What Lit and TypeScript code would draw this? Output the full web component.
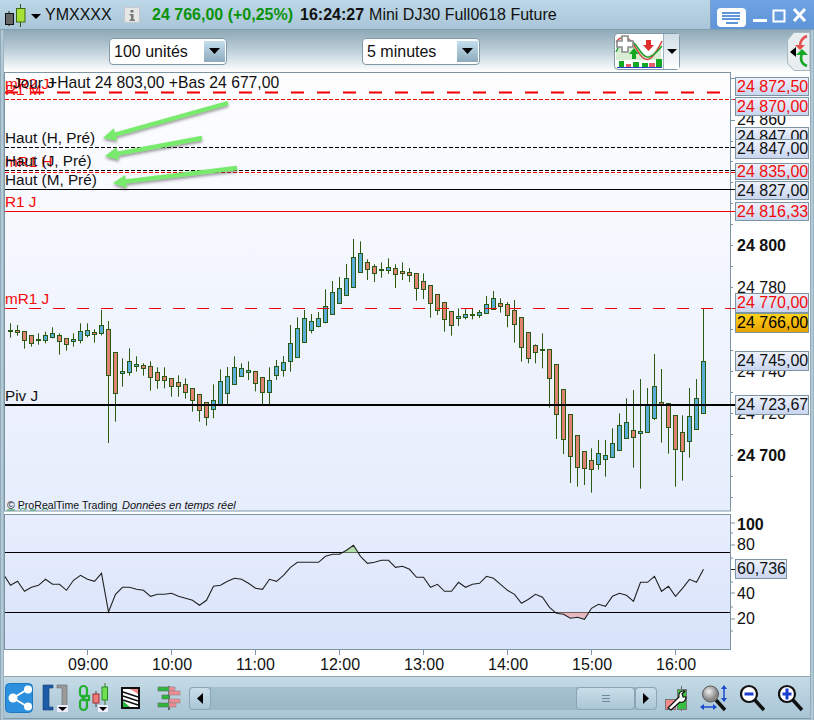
import { LitElement, html, css, svg } from "lit";
import { customElement } from "lit/decorators.js";

type C = [number, number, number, number, number];
const A: C[] = [[280,323,301,304,1],[285,317,301,307,0],[305,356,304,331,0],[315,350,316,340,0],[310,344,328,331,1],[305,340,316,331,1],[292,325,310,322,1],[310,374,316,334,0],[325,362,325,343,0],[310,350,328,334,1],[280,340,304,331,1],[280,322,301,316,1],[298,338,307,313,0],[240,316,286,310,1],[273,639,298,436,0],[367,575,367,490,0],[385,470,424,430,1],[355,437,394,427,1],[379,425,403,409,1],[400,437,406,415,0],[394,482,409,442,0],[412,476,427,451,0],[412,475,439,451,0],[445,500,445,469,0],[436,500,457,469,0],[445,506,463,487,0],[475,545,475,511,0],[493,575,493,541,0],[517,587,517,562,0],[463,565,511,538,1],[418,525,454,525,1],[411,525,439,490,1],[379,465,412,463,1],[400,440,415,439,1],[394,450,421,427,1],[424,484,424,460,0],[442,525,442,487,0],[412,525,451,487,1]];
const B: C[] = [[390,450,408,435,1],[378,440,396,420,1],[285,425,340,395,1],[262,382,295,382,1],[240,337,265,337,1],[252,310,274,301,1],[246,292,265,289,1],[178,280,229,277,1],[153,253,187,253,1],[141,220,175,220,1],[102,196,145,196,1],[27,172,82,172,1],[34,127,70,127,1],[88,150,97,118,0],[103,156,109,130,0],[97,143,118,121,1],[85,132,112,121,1],[103,174,115,133,0],[97,150,124,130,0],[114,156,127,136,0],[130,212,130,175,0],[130,207,154,178,0],[166,263,166,220,0],[193,255,193,241,0],[217,305,217,268,0],[244,317,244,286,0],[235,288,259,265,1],[235,268,253,262,1],[235,268,253,256,1],[240,264,247,256,1],[198,250,223,250,1],[183,238,205,238,1],[205,248,220,229,0],[216,292,223,256,0],[210,338,241,283,0],[262,395,262,352,0],[307,400,307,385,0]];
const D: C[] = [[133,190,136,157,0],[100,205,148,151,1],[148,323,148,235,0],[193,417,193,343,0],[268,462,268,418,0],[343,549,343,469,0],[406,560,406,502,0],[454,555,454,505,0],[445,578,481,508,0],[420,509,460,493,1],[420,530,466,478,1],[385,473,430,472,1],[340,451,376,451,1],[295,415,367,415,1],[270,503,391,412,0],[237,566,394,400,1],[264,397,316,397,1],[162,360,259,355,1],[207,428,307,313,0],[310,461,310,382,0],[346,560,346,448,0],[346,542,397,454,0],[264,473,349,424,1],[237,388,295,388,1],[25,340,184,340,1]];

const snap = (v: number) => Math.round(v - 0.5) + 0.5;
const toReal = (g: C[], y0: number) => g.map(c => [y0 + c[0] / 3, y0 + c[1] / 3, y0 + c[2] / 3, y0 + c[3] / 3, c[4]] as C);
const candles: C[] = [...toReal(A, 230), ...toReal(B, 230), ...toReal(D, 300)];

const rsiA = [271,259,289,277,271,253,268,268,286,256,241,253,259,235,351,298,277,277,283,286,304,298,298,295,304,310,316,331,316,274,271,259,250,253,265,280,283,253,259,241,217,202,202,202,202,184,178,178,166,151,184,205,202,196,196,217];
const rsiB = [214,223,247,247,277,268,289,289,262,277,268,265,244,250,268,286,298,325,313,298,307,337,355,358,370,367,373,340,328,334,304,295,301,319,262,262,244,289,274,304,280,253,262,223];
const rsiPts = [`5,${495 + 245 / 3}`, ...rsiA.map((z, i) => `${10.5 + 7 * i},${(495 + z / 3).toFixed(1)}`), ...rsiB.map((z, i) => `${10.5 + 7 * (i + 56)},${(495 + z / 3).toFixed(1)}`)].join(" ");

const lines = [
  { y: 92.5, w: 2, c: "#f00000", d: "13 13", x2: 730 },
  { y: 99.5, w: 1, c: "#f00000", d: "4 2", x2: 735 },
  { y: 147.5, w: 1, c: "#000", d: "4 2", x2: 735 },
  { y: 170.5, w: 1, c: "#000", d: "4 2", x2: 735 },
  { y: 172.5, w: 1, c: "#f00000", d: "4 2", x2: 735 },
  { y: 189.5, w: 1, c: "#000", d: "", x2: 735 },
  { y: 211.5, w: 1, c: "#f00000", d: "", x2: 735 },
  { y: 308.5, w: 1, c: "#f00000", d: "12 12", x2: 735 },
  { y: 405, w: 2, c: "#000", d: "", x2: 735 },
  { y: 552.5, w: 1, c: "#000", d: "", x2: 730 },
  { y: 612.5, w: 1, c: "#000", d: "", x2: 730 },
];

const axisText: [string, number, boolean][] = [["24 880", 84, false], ["24 860", 119, false], ["24 847,00", 134, false], ["24 800", 245, true], ["24 780", 287, false], ["24 740", 371, false], ["24 720", 413, false], ["24 700", 455, true]];
const tags: [string, number, number, string][] = [
  ["24 872,50", 77, 96, "red"], ["24 870,00", 97, 116, "red"], ["24 847,00", 127, 146, ""], ["24 847,00", 139, 159, ""],
  ["24 835,00", 163, 180, "red"], ["24 827,00", 181, 200, ""], ["24 816,33", 202, 221, "red"],
  ["24 770,00", 293, 313, "red"], ["24 766,00", 313, 333, "gold"], ["24 745,00", 351, 371, ""], ["24 723,67", 395, 415, ""],
];
const labels: [string, number, number, string][] = [
  ["mR2 J", 5, 83, "red"], ["R1 M", 5, 89, "red"],
  ["Jour J", 13, 82, ""], ["+Haut 24 803,00 +Bas 24 677,00", 48, 82, "wide"],
  ["Haut (H, Pré)", 5, 137, ""], ["mR1 H", 5, 161, "red"], ["Haut (J, Pré)", 5, 160, ""], ["Haut (M, Pré)", 5, 179, ""],
  ["R1 J", 5, 201, "red"], ["mR1 J", 5, 298, "red"], ["Piv J", 5, 395, ""],
];
const rsiAxis: [string, number, boolean][] = [["100", 524, true], ["80", 544, false], ["40", 593, false], ["20", 618, false]];
const priceTicks = [78, 99, 120, 141, 161, 182, 203, 224, 245, 266, 287, 308, 329, 350, 371, 392, 413, 434, 455, 476, 497];
const rsiMajor = [523, 545, 569.5, 593, 619];
const rsiMinor = [533, 558, 582, 607, 631];
const times = ["09:00", "10:00", "11:00", "12:00", "13:00", "14:00", "15:00", "16:00"];

function arrow(x1: number, y1: number, x2: number, y2: number) {
  const a = Math.atan2(y2 - y1, x2 - x1);
  const ux = Math.cos(a), uy = Math.sin(a), nx = -uy, ny = ux;
  const bx = x2 - ux * 13, by = y2 - uy * 13;
  const p = (x: number, y: number) => `${x.toFixed(1)},${y.toFixed(1)}`;
  const pts = [
    p(x1 + nx * 2.2, y1 + ny * 2.2), p(bx + nx * 2.2, by + ny * 2.2), p(bx + nx * 6.5, by + ny * 6.5), p(x2, y2),
    p(bx - nx * 6.5, by - ny * 6.5), p(bx - nx * 2.2, by - ny * 2.2), p(x1 - nx * 2.2, y1 - ny * 2.2),
  ].join(" ");
  return svg`<polygon points=${pts} fill="#78ea6c" filter="url(#sh)"></polygon>`;
}

const tri = (x: number, y: number, w: number, h: number, dir = "down", fill = "#000") => {
  if (dir === "down") return svg`<polygon points="${x},${y} ${x + w},${y} ${x + w / 2},${y + h}" fill=${fill}></polygon>`;
  if (dir === "left") return svg`<polygon points="${x + w},${y} ${x + w},${y + h} ${x},${y + h / 2}" fill=${fill}></polygon>`;
  return svg`<polygon points="${x},${y} ${x},${y + h} ${x + w},${y + h / 2}" fill=${fill}></polygon>`;
};

@customElement("app-root")
export class AppRoot extends LitElement {
  static styles = css`
    :host { display: block; width: 814px; height: 720px; overflow: hidden; font-family: "Liberation Sans", Arial, sans-serif; font-size: 16px; color: #111; background: #a9c3d2; }
    .title { height: 29px; display: flex; align-items: center; background: linear-gradient(#bcd7e7, #a9c6d8); border-bottom: 1px solid #83a0af; white-space: pre; }
    .title svg { display: block; flex: none; }
    .sym { margin-left: 3px; width: 79px; }
    .info { margin-right: 12px; }
    .chg { font-weight: bold; color: #0b920b; margin-right: 7px; }
    .clock { font-weight: bold; }
    .desc { margin-left: 5px; }
    .win { margin-left: auto; width: 103px; height: 29px; background: linear-gradient(#6ea3e4, #5e95d8); display: flex; align-items: center; border-left: 1px solid #7c9fc4; }
    .body { display: flex; height: 690px; }
    .frame { width: 4px; flex: none; background: linear-gradient(90deg, #7f9cac, #c3d7e2 50%, #8ca8b8); }
    .main { width: 806px; display: flex; flex-direction: column; }
    .toolbar { flex: none; height: 42px; display: flex; align-items: center; background: linear-gradient(#8fa9b7, #b9ccd6 45%, #fff); }
    .sel { box-sizing: border-box; width: 118px; height: 27px; background: #fff; border: 1px solid #7f99a8; border-radius: 4px; display: flex; align-items: center; padding: 0 1px 0 4px; justify-content: space-between; }
    .sel.first { margin-left: 105px; }
    .sel.second { margin-left: 135px; }
    .sel .txt { padding-top: 1px; }
    .drop { width: 21px; height: 21px; background: linear-gradient(#c4deee, #8dabbd); display: flex; align-items: center; justify-content: center; }
    .ind { margin-left: 134px; width: 66px; height: 37px; box-sizing: border-box; border: 1px solid #7f99a8; border-radius: 4px; display: flex; background: #fff; }
    .ind .more { flex: 1; border-left: 1px solid #9db2bf; background: linear-gradient(#cfdde5, #fff); display: flex; align-items: center; justify-content: center; }
    .side { margin-left: 107px; display: block; }
    .stage { flex: none; position: relative; height: 604px; background: #fff; }
    .stage > svg { position: absolute; left: 0; top: 0; display: block; }
    .lb { position: absolute; line-height: 18px; height: 18px; white-space: pre; color: #111; font-size: 15.3px; }
    .lb.ax { font-size: 16px; }
    .lb.wide { font-size: 15.7px; }
    .lb.red { color: #f30a0a; }
    .lb.bold { font-weight: bold; }
    .lb.sm { font-size: 10.6px; line-height: 12px; height: 12px; }
    .lb.it { font-size: 11px; font-style: italic; }
    .tag { position: absolute; box-sizing: border-box; border: 1px solid #7d95a3; background: linear-gradient(#eef2fd, #c9d5ef); padding-left: 1px; white-space: pre; display: flex; align-items: center; color: #111; }
    .tag.red { color: #f30a0a; }
    .tag.gold { background: linear-gradient(#ffd21a, #e6a200); color: #000; }
    .bar { flex: none; height: 43px; box-sizing: border-box; display: flex; align-items: center; border-top: 1px solid #8ea6b3; border-bottom: 1px solid #7f99a8; background: linear-gradient(#c5dbe7, #a8c4d4); padding: 1px 0 0 1px; }
    .bar > svg { display: block; flex: none; }
    .m9 { margin-left: 9px; } .m10 { margin-left: 10px; } .m13 { margin-left: 13px; } .m17 { margin-left: 17px; } .m12 { margin-left: 12px; }
    .scroll { flex: none; margin: 0 8px; width: 468px; height: 23px; display: flex; background: #99b5c5; border-radius: 4px; }
    .sb { box-sizing: border-box; flex: none; width: 22px; border: 1px solid #8aa5b4; border-radius: 4px; background: linear-gradient(#c9dee9, #aac6d6); display: flex; align-items: center; justify-content: center; }
    .track { flex: 1; background: linear-gradient(#a5c0cf, #9ab7c7); }
    .thumb { box-sizing: border-box; width: 59px; border: 1px solid #8aa5b4; border-radius: 4px; background: linear-gradient(#c9dee9, #aac6d6); display: flex; align-items: center; justify-content: center; }
  `;

  private chart() {
    return svg`
      <defs>
        <linearGradient id="g1" x1="0" y1="0" x2="0" y2="1"><stop offset="0" stop-color="#fefeff"/><stop offset="1" stop-color="#e6edfc"/></linearGradient>
        <linearGradient id="g2" x1="0" y1="0" x2="0" y2="1"><stop offset="0" stop-color="#e8eefd"/><stop offset="1" stop-color="#d8e3fa"/></linearGradient>
        <linearGradient id="g3" x1="0" y1="0" x2="0" y2="1"><stop offset="0" stop-color="#e6b4b8"/><stop offset="1" stop-color="#e4c4cc"/></linearGradient>
        <filter id="sh" x="-20%" y="-60%" width="140%" height="220%"><feDropShadow dx="0" dy="2" stdDeviation="1.6" flood-color="#444" flood-opacity=".55"/></filter>
      </defs>
      <rect x="4.5" y="72.5" width="726" height="438.5" fill="url(#g1)" stroke="#7d95a3"/>
      <rect x="4.5" y="514.5" width="726" height="135" fill="url(#g2)" stroke="#7d95a3"/>
      ${candles.map((c, i) => {
        const x = 10.5 + 7 * i;
        const top = snap(c[2]);
        const h = Math.max(1, Math.round(c[3] - c[2]));
        return svg`<line x1=${x} x2=${x} y1=${c[0]} y2=${c[1]} stroke="#2a5a12"/>
          <rect x=${x - 2} y=${top} width="4" height=${h} fill=${c[4] ? "#58aed6" : "#e08272"} stroke="#2a5a12"/>`;
      })}
      ${lines.map(l => svg`<line x1="5" x2=${l.x2} y1=${l.y} y2=${l.y} stroke=${l.c} stroke-width=${l.w} stroke-dasharray=${l.d || "none"}/>`)}
      <polygon points="343.3,552.5 353.3,545.3 358.3,552.5" fill="#b4e0ae"/>
      <polygon points="556.3,612.5 563.3,614.3 570.3,618.3 577.3,617.3 584.3,619.3 589.6,612.5" fill="url(#g3)"/>
      <polyline points=${rsiPts} fill="none" stroke="#222" stroke-width="1.1"/>
      ${arrow(228, 103, 103, 138)}
      ${arrow(202, 138, 105, 156)}
      ${arrow(237, 168, 113, 183)}
      ${priceTicks.map((y) => svg`<line x1="731" x2=${(y - 78) % 42 === 0 ? 735 : 733} y1=${y + 0.5} y2=${y + 0.5} stroke="#7d95a3"/>`)}
      ${rsiMajor.map(y => svg`<line x1="731" x2="735" y1=${y} y2=${y} stroke="#7d95a3"/>`)}
      ${rsiMinor.map(y => svg`<line x1="731" x2="733" y1=${y} y2=${y} stroke="#7d95a3"/>`)}
      <line x1="731" x2="735" y1="569.5" y2="569.5" stroke="#222"/>
      ${times.map((_, i) => svg`<line x1=${87.5 + 84 * i} x2=${87.5 + 84 * i} y1="650" y2="655" stroke="#7d95a3"/>`)}
      <path d="M7 510h8M20 510l3-2 3 2M30 510h6M42 510l3-2 3 2" fill="none" stroke="#2aa04a" stroke-width="1"/>
    `;
  }

  private pos(x: number, cy: number) {
    return `left:${x - 4}px;top:${cy - 8 - 72}px`;
  }

  private indicatorIcon() {
    return html`<svg width="48" height="35" viewBox="0 0 48 35">
      <path d="M1 20C8 4 15 4 22 14S34 26 46 8L46 26L1 26Z" fill="#cfe8c8" opacity=".8"/>
      <path d="M1 8C8 0 14 2 22 16S36 30 47 7" fill="none" stroke="#d84040" stroke-width="1.5"/>
      <path d="M1 18C8 3 16 3 23 14S34 28 47 12" fill="none" stroke="#20a030" stroke-width="1.5"/>
      <path d="M7 2h6v5h5v6h-5v5H7v-5H2V7h5z" fill="#fff" stroke="#8a8a8a" stroke-width="1.6"/>
      <path d="M31 6h5v5h3l-5.500 6-5.500-6h3z" fill="#e02f2f"/>
      <path d="M17 25v-5h-3l5-6 5 6h-3v5z" fill="#12a822"/>
      <g fill="#12a822"><rect x="4" y="27" width="5" height="6"/><rect x="18" y="28" width="6" height="5"/><rect x="27" y="29" width="6" height="4"/><rect x="41" y="25" width="6" height="8"/></g>
      <g fill="#e2606a"><rect x="11" y="30" width="5" height="3"/><rect x="34" y="29" width="6" height="4"/></g>
      <rect x="2" y="33" width="45" height="1" fill="#2a3fd0"/>
    </svg>`;
  }

  render() {
    return html`
      <div class="title">
        <svg width="42" height="29" viewBox="0 0 42 29">
          <path d="M9 11v15" stroke="#222"/><rect x="5.500" y="13.500" width="8" height="11" fill="#666" stroke="#111"/>
          <path d="M20.500 4v23" stroke="#2a5a12"/><rect x="16.500" y="8.500" width="8.500" height="13.500" fill="#a8e038" stroke="#3a6a12"/>
          ${tri(31, 14, 10, 5)}
        </svg>
        <span class="sym">YMXXXX</span>
        <svg class="info" width="16" height="16" viewBox="0 0 16 16"><rect x=".5" y=".5" width="15" height="15" fill="#e6e8e8" stroke="#c4c8ca"/><rect x="6.500" y="3" width="3" height="2.500" fill="#777"/><path d="M5.500 7h4v5.500h1.500V14H5.500v-1.500H7V8.500H5.500z" fill="#777"/></svg>
        <span class="chg">24 766,00 (+0,25%)</span>
        <span class="clock">16:24:27</span>
        <span class="desc">Mini DJ30 Full0618 Future</span>
        <div class="win">
          <svg width="102" height="29" viewBox="0 0 102 29">
            <rect x="6" y="8" width="29" height="19" rx="4" fill="#fff"/>
            <g fill="#5e95d8"><rect x="11" y="12" width="18" height="2"/><rect x="11" y="15" width="18" height="2"/><rect x="11" y="18" width="18" height="2"/><rect x="15" y="22" width="12" height="2"/></g>
            <rect x="42" y="19" width="14" height="3" fill="#fff"/>
            <rect x="62.500" y="10.500" width="11" height="11" fill="none" stroke="#fff" stroke-width="2"/>
            <path d="M83 9l11 12M94 9L83 21" stroke="#fff" stroke-width="3"/>
          </svg>
        </div>
      </div>
      <div class="body">
        <div class="frame"></div>
        <div class="main">
          <div class="toolbar">
            <div class="sel first"><span class="txt">100 unités</span><span class="drop"><svg width="11" height="6"><polygon points="0,0 11,0 5.500,6"/></svg></span></div>
            <div class="sel second"><span class="txt">5 minutes</span><span class="drop"><svg width="11" height="6"><polygon points="0,0 11,0 5.500,6"/></svg></span></div>
            <div class="ind">${this.indicatorIcon()}<div class="more"><svg width="10" height="5"><polygon points="0,0 10,0 5,5"/></svg></div></div>
            <svg class="side" width="23" height="39" viewBox="0 0 23 39">
              <path d="M.5 8L7 .5h16v38H7L.5 31z" fill="#e8edf0" stroke="#a8b8c2"/>
              ${tri(3, 15, 6, 10, "left")}
              <path d="M20 4c-5 2-7 6-7 10" fill="none" stroke="#e25050" stroke-width="2.500"/><path d="M8 13l5 5 5-5z" fill="#e25050"/>
              <path d="M20 34c-6-2-7-7-5-13" fill="none" stroke="#18a828" stroke-width="2.500"/><path d="M9 23l6-6 6 6z" fill="#18a828"/>
            </svg>
          </div>
          <div class="stage">
            <svg width="806" height="604" viewBox="4 72 806 604">${this.chart()}</svg>
            ${labels.map(l => html`<div class="lb ${l[3]}" style=${this.pos(l[1], l[2])}>${l[0]}</div>`)}
            <div class="lb sm" style="left:3px;top:427px">© ProRealTime Trading</div><div class="lb sm it" style="left:118px;top:427px">Données en temps réel</div>
            ${axisText.map(a => html`<div class="lb ax ${a[2] ? "bold" : ""}" style=${this.pos(737, a[1])}>${a[0]}</div>`)}
            ${rsiAxis.map(a => html`<div class="lb ax ${a[2] ? "bold" : ""}" style=${this.pos(737, a[1])}>${a[0]}</div>`)}
            ${tags.map(t => html`<div class="tag ${t[3]}" style="left:731px;width:74px;top:${t[1] - 72}px;height:${t[2] - t[1]}px">${t[0]}</div>`)}
            <div class="tag" style="left:731px;width:52px;top:487px;height:20px">60,736</div>
            ${times.map((t, i) => html`<div class="lb ax" style=${this.pos(87.5 + 84 * i - 19.5, 664)}>${t}</div>`)}
          </div>
          <div class="bar">
            <svg width="28" height="30" viewBox="0 0 28 30"><rect x=".5" y=".5" width="27" height="29" rx="4" fill="#2c90de" stroke="#1f78c0"/><path d="M8 15L23 6M8 15l15 9" stroke="#fff" stroke-width="2"/><circle cx="8" cy="15" r="4.500" fill="#fff"/><circle cx="23" cy="6.500" r="4" fill="#fff"/><circle cx="23" cy="23.500" r="4" fill="#fff"/></svg>
            <svg class="m9" width="26" height="28" viewBox="0 0 26 28"><path d="M11 1H1v25h10v-3H7V4h4z" fill="#1c5ca8" stroke="#123c70" stroke-width=".6"/><path d="M15 1h10v22h-5V4h-5z" fill="#9a9a9a" stroke="#666" stroke-width=".6"/><rect x="15" y="21" width="11" height="7" fill="#eef"/>${tri(16, 23, 9, 4)}</svg>
            <svg class="m10" width="30" height="30" viewBox="0 0 30 30"><g fill="none" stroke="#22b030" stroke-width="2.200"><rect x="2" y="3" width="7" height="11" rx="3.500"/><rect x="5" y="13" width="6" height="4"/><rect x="2" y="16" width="7" height="11" rx="3.500"/></g><path d="M18 8v16" stroke="#444"/><rect x="15" y="11" width="6" height="9" fill="#f07a7a" stroke="#a03030"/><path d="M27 0v22" stroke="#3a7a22"/><rect x="24" y="4" width="5.500" height="13" fill="#70e050" stroke="#2a8a22"/><rect x="20" y="22" width="10" height="7" fill="#eef"/>${tri(21, 24, 8, 4)}</svg>
            <svg class="m13" width="19" height="22" viewBox="0 0 19 22"><rect x="1" y="1" width="17" height="20" fill="#fff" stroke="#111" stroke-width="2"/><path d="M2 5l15 5M2 9l15 5M2 13l15 5" stroke="#111" stroke-width="1.500"/><polygon points="9,2 17,2 17,7" fill="#f08a8a"/><polygon points="2,20 2,14 9,20" fill="#28b840"/></svg>
            <svg class="m17" width="24" height="24" viewBox="0 0 24 24"><path d="M12 0v24" stroke="#666" stroke-width="2"/><g fill="#2cb838" stroke="#666" stroke-width=".6"><rect x="1" y="1" width="11" height="4"/><rect x="5" y="9" width="7" height="4"/><rect x="1" y="17" width="11" height="4"/></g><g fill="#f08a90" stroke="#888" stroke-width=".6"><rect x="12" y="1" width="6" height="4"/><rect x="12" y="5" width="11" height="4"/><rect x="12" y="13" width="11" height="4"/><rect x="12" y="17" width="7" height="4"/></g></svg>
            <div class="scroll">
              <div class="sb"><svg width="6" height="11"><polygon points="6,0 6,11 0,5.500"/></svg></div>
              <div class="track"></div>
              <div class="thumb"><svg width="8" height="7"><path d="M0 .5h8M0 3.500h8M0 6.500h8" stroke="#6d8a9a"/></svg></div>
              <div class="sb"><svg width="6" height="11"><polygon points="0,0 0,11 6,5.500"/></svg></div>
            </div>
            <svg width="22" height="25" viewBox="0 0 22 25"><rect x=".5" y="13.500" width="10" height="10" fill="#f08a8a" stroke="#777"/><path d="M16.500 0v25" stroke="#666"/><rect x="12.500" y="3.500" width="9" height="20" fill="#38c040" stroke="#777"/><path d="M3 22L14 11c-1-4 2-7 6-6l-3 3 1 3 3 0 0 0c0 4-3 6-6 5L6 24z" fill="#fff" stroke="#111" stroke-width="1.200"/></svg>
            <svg class="m13" width="28" height="28" viewBox="0 0 28 28"><defs><radialGradient id="mg" cx=".4" cy=".35"><stop offset="0" stop-color="#f0f0f0"/><stop offset="1" stop-color="#888"/></radialGradient></defs><path d="M16 16l9 10" stroke="#111" stroke-width="3.500"/><circle cx="10.500" cy="10" r="8" fill="url(#mg)" stroke="#555"/><g stroke="#1a4ad0" stroke-width="1.500" fill="#1a4ad0"><path d="M24 3v13"/><path d="M21 5l3-4 3 4zM21 14l3 4 3-4z" stroke="none"/><path d="M3 23h11"/><path d="M4 20l-4 3 4 3zM13 20l4 3-4 3z" stroke="none"/></g></svg>
            <svg class="m12" width="25" height="28" viewBox="0 0 25 28"><path d="M14 15l10 11" stroke="#111" stroke-width="3.500"/><circle cx="9" cy="10" r="8" fill="#fff" stroke="#111" stroke-width="2.200"/><rect x="4.500" y="8.500" width="9" height="3" fill="#1a3fd0"/></svg>
            <svg class="m13" width="25" height="28" viewBox="0 0 25 28"><path d="M14 15l10 11" stroke="#111" stroke-width="3.500"/><circle cx="9" cy="10" r="8" fill="#fff" stroke="#111" stroke-width="2.200"/><path d="M4.500 8.500h3v-4h3v4h3v3h-3v4h-3v-4h-3z" fill="#1a3fd0"/></svg>
          </div>
        </div>
        <div class="frame"></div>
      </div>
    `;
  }
}
